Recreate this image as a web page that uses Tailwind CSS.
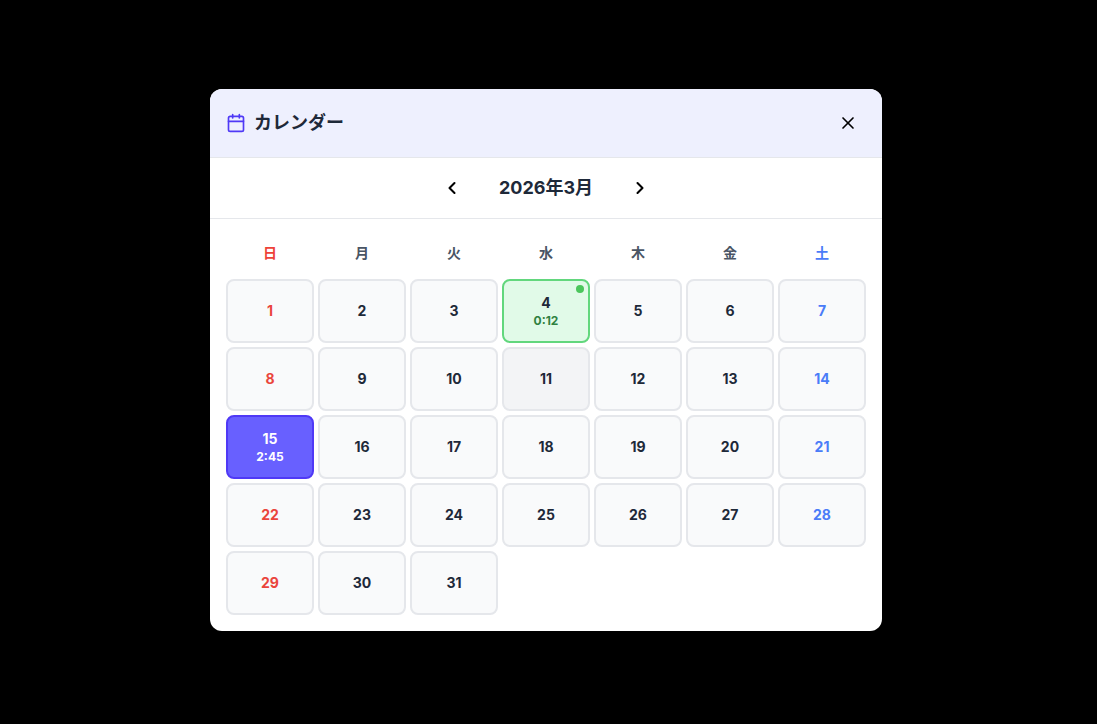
<!DOCTYPE html>
<html lang="ja">
<head>
  <meta charset="UTF-8">
  <meta name="viewport" content="width=device-width, initial-scale=1.0">
  <title>カレンダー</title>
  <script src="https://cdn.jsdelivr.net/npm/@tailwindcss/browser@4"></script>
</head>
<body class="bg-black font-['Inter','Noto_Sans_CJK_JP',sans-serif] antialiased">
  <div class="flex min-h-screen items-center justify-center pr-[5px] pb-1">
    <div role="dialog" aria-labelledby="calendar-title" class="w-full max-w-2xl overflow-hidden rounded-xl bg-white">

      <!-- Header -->
      <header class="flex items-center justify-between border-b border-gray-200 bg-[#eef0fe] p-4">
        <div class="flex items-center gap-2">
          <svg class="size-5 text-indigo-600" viewBox="0 0 24 24" fill="none" stroke="currentColor" stroke-width="2" stroke-linecap="round" stroke-linejoin="round">
            <path d="M8 2v4" />
            <path d="M16 2v4" />
            <rect width="18" height="18" x="3" y="4" rx="2" />
            <path d="M3 10h18" />
          </svg>
          <h2 id="calendar-title" class="text-lg font-bold text-gray-800">カレンダー</h2>
        </div>
        <button type="button" aria-label="閉じる" class="rounded-lg p-2 hover:bg-white/50">
          <svg class="size-5" viewBox="0 0 24 24" fill="none" stroke="currentColor" stroke-width="2" stroke-linecap="round" stroke-linejoin="round">
            <path d="M18 6 6 18" />
            <path d="m6 6 12 12" />
          </svg>
        </button>
      </header>

      <!-- Month navigation -->
      <div class="flex items-center justify-center gap-4 border-b border-gray-200 py-3">
        <button type="button" aria-label="前の月" class="rounded-lg p-2 hover:bg-gray-100">
          <svg class="size-5" viewBox="0 0 24 24" fill="none" stroke="currentColor" stroke-width="2.5" stroke-linecap="round" stroke-linejoin="round">
            <path d="m15 18-6-6 6-6" />
          </svg>
        </button>
        <span class="min-w-[120px] text-center text-lg font-bold text-gray-800">2026年3月</span>
        <button type="button" aria-label="次の月" class="rounded-lg p-2 hover:bg-gray-100">
          <svg class="size-5" viewBox="0 0 24 24" fill="none" stroke="currentColor" stroke-width="2.5" stroke-linecap="round" stroke-linejoin="round">
            <path d="m9 18 6-6-6-6" />
          </svg>
        </button>
      </div>

      <!-- Calendar -->
      <div class="p-4">
        <div class="mb-2 grid grid-cols-7 gap-1 text-center text-sm font-bold text-gray-600">
          <div class="py-2 text-[#ee4238]">日</div>
          <div class="py-2">月</div>
          <div class="py-2">火</div>
          <div class="py-2">水</div>
          <div class="py-2">木</div>
          <div class="py-2">金</div>
          <div class="py-2 text-[#4a7cf8]">土</div>
        </div>
        <div id="days" class="grid grid-cols-7 gap-1"></div>
      </div>
    </div>
  </div>

  <script>
    const DAYS_IN_MONTH = 31;
    const SELECTED_DAY = 15;
    const HOVERED_DAY = 11;
    const records = { 4: '0:12', 15: '2:45' };

    function cellClass(day) {
      if (day === SELECTED_DAY) return 'border-indigo-600 bg-[#6860ff]';
      if (records[day]) return 'border-[#62d77d] bg-[#e1fae8]';
      if (day === HOVERED_DAY) return 'border-gray-200 bg-gray-100';
      return 'border-gray-200 bg-gray-50';
    }

    function textClass(day) {
      if (day === SELECTED_DAY) return 'text-white';
      // March 1st, 2026 is a Sunday
      if (day % 7 === 1) return 'text-[#ea453c]';
      if (day % 7 === 0) return 'text-[#4a7cf8]';
      return 'text-gray-800';
    }

    function renderDays() {
      let html = '';
      for (let day = 1; day <= DAYS_IN_MONTH; day++) {
        const time = records[day];
        const selected = day === SELECTED_DAY;
        html += `
          <button type="button" class="relative flex h-16 flex-col items-center justify-center rounded-lg border-2 font-bold ${cellClass(day)}">
            <span class="text-sm ${textClass(day)}">${day}</span>
            ${time ? `<span class="text-xs ${selected ? 'text-white' : 'text-[#2f8140]'}">${time}</span>` : ''}
            ${time && !selected ? '<span class="absolute top-1 right-1 size-2 rounded-full bg-[#4bc65c]"></span>' : ''}
          </button>
        `;
      }
      document.getElementById('days').innerHTML = html;
    }

    renderDays();
  </script>
</body>
</html>
